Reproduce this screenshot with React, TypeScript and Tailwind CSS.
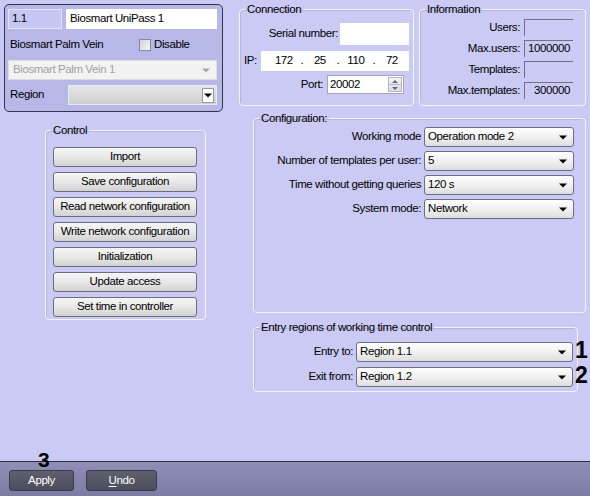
import React from "react";

const font = "font-['Liberation_Sans',Arial,sans-serif]";

function Arrow({ gray = false }: { gray?: boolean }) {
  return (
    <svg width="8" height="5" viewBox="0 0 8 5" className="shrink-0">
      <path d="M0 0.5h8L4 4.5z" fill={gray ? "#a8a8a8" : "#000"} />
    </svg>
  );
}

function Combo({ value, className }: { value: string; className: string }) {
  return (
    <div
      className={`flex h-[20px] items-center rounded-[3px] border border-[#6e6e7e] bg-linear-to-b from-white via-[#f1f1f1] to-[#dedede] pl-[3px] pr-[6px] ${className}`}
    >
      <span className="flex-1 truncate">{value}</span>
      <Arrow />
    </div>
  );
}

function Group({
  title,
  className,
  children,
}: {
  title: string;
  className: string;
  children: React.ReactNode;
}) {
  return (
    <fieldset className={`rounded-[4px] border border-[#f4f4ff] shadow-[inset_1px_1px_0_#b4b4dc] ${className}`}>
      <legend className="ml-[5px] px-[2px] leading-[14px]">{title}</legend>
      {children}
    </fieldset>
  );
}

function InfoRow({ label, value }: { label: string; value: string }) {
  return (
    <div className="flex h-[17px] items-center justify-end">
      <span>{label}</span>
      <div className="ml-[4px] flex h-[17px] w-[49px] items-center justify-end border-t border-l border-[#6f6f86] border-r-white border-b-white pr-[3px] leading-none">
        {value}
      </div>
    </div>
  );
}

function ConfigRow({ label, value }: { label: string; value: string }) {
  return (
    <div className="flex items-center justify-end">
      <span>{label}</span>
      <Combo value={value} className="ml-[3px] w-[150px]" />
    </div>
  );
}

const buttons = [
  "Import",
  "Save configuration",
  "Read network configuration",
  "Write network configuration",
  "Initialization",
  "Update access",
  "Set time in controller",
];

export default function App() {
  return (
    <div className={`flex h-[496px] w-[590px] flex-col overflow-hidden bg-[#cacaf4] text-[11.5px] tracking-[-0.4px] text-black ${font}`}>
      <div className="relative flex flex-1">
        {/* left column */}
        <div className="flex w-[239px] flex-col pl-[4px] pt-[4px]">
          <div className="h-[108px] w-[219px] rounded-[5px] border border-[#34344e] bg-[#b7b7e8] pl-[3px] pr-[5px] pt-[4px]">
            <div className="flex h-[20px] gap-[4px]">
              <div className="flex w-[54px] items-center border border-[#e2e2ff] bg-[#c6c6f3] pl-[3px]">1.1</div>
              <div className="flex flex-1 items-center bg-white pl-[4px]">Biosmart UniPass 1</div>
            </div>
            <div className="flex h-[31px] items-center pl-[2px]">
              <span className="w-[129px]">Biosmart Palm Vein</span>
              <span className="h-[12px] w-[12px] border border-[#8a8a9c] bg-linear-to-br from-[#d4d4d8] to-[#f6f6f8]" />
              <span className="ml-[3px]">Disable</span>
            </div>
            <div className="flex h-[20px] items-center border border-[#dcdcdc] bg-[#f2f2f2] pl-[4px] pr-[6px] text-[#a2a2a2]">
              <span className="flex-1">Biosmart Palm Vein 1</span>
              <Arrow gray />
            </div>
            <div className="mt-[5px] flex h-[20px] items-center">
              <span className="w-[60px] pl-[2px]">Region</span>
              <div className="flex h-[20px] flex-1 items-center justify-end border border-[#e8e8f0] bg-linear-to-b from-[#e6e6e6] to-[#cfcfcf] pr-[2px]">
                <div className="flex h-[15px] w-[12px] items-center justify-center border border-[#9a9a9a] bg-white">
                  <Arrow />
                </div>
              </div>
            </div>
          </div>

          <Group title="Control" className="ml-[41px] mt-[11px] h-[197px] w-[161px]">
            <div className="flex flex-col gap-[5px] pl-[7px] pt-[10px]">
              {buttons.map((b) => (
                <div
                  key={b}
                  className="flex h-[20px] w-[144px] items-center justify-center rounded-[3px] border border-[#6c6c7c] bg-linear-to-b from-[#f6f6f6] via-[#e8e8e8] to-[#d2d2d2]"
                >
                  {b}
                </div>
              ))}
            </div>
          </Group>
        </div>

        {/* right column */}
        <div className="flex flex-col pt-[2px]">
          <div className="flex gap-[5px]">
            <Group title="Connection" className="h-[104px] w-[175px]">
              <div className="flex flex-col pt-[7px]">
                <div className="flex items-center justify-end pr-[4px]">
                  <span>Serial number:</span>
                  <div className="ml-[2px] h-[22px] w-[69px] bg-white" />
                </div>
                <div className="mt-[6px] flex items-center pl-[4px] pr-[4px]">
                  <span>IP:</span>
                  <div className="ml-[4px] flex h-[20px] flex-1 items-center bg-white pl-[12px]">
                    <span className="w-[22px] text-center">172</span>
                    <span className="w-[14px] text-center">.</span>
                    <span className="w-[22px] text-center">25</span>
                    <span className="w-[14px] text-center">.</span>
                    <span className="w-[22px] text-center">110</span>
                    <span className="w-[14px] text-center">.</span>
                    <span className="w-[22px] text-center">72</span>
                  </div>
                </div>
                <div className="mt-[4px] flex items-center justify-end pr-[9px]">
                  <span>Port:</span>
                  <div className="ml-[4px] flex h-[19px] w-[77px] items-center border border-[#a4a4b4] bg-white pl-[2px] pr-[1px]">
                    <span className="flex-1">20002</span>
                    <div className="flex h-[15px] w-[14px] flex-col border border-[#b4b4c4] bg-linear-to-b from-[#f4f4f8] to-[#dcdce4]">
                      <div className="flex flex-1 items-center justify-center border-b border-[#b4b4c4]">
                        <svg width="6" height="3" viewBox="0 0 6 3"><path d="M0 3h6L3 0z" fill="#5c6a80" /></svg>
                      </div>
                      <div className="flex flex-1 items-center justify-center">
                        <svg width="6" height="3" viewBox="0 0 6 3"><path d="M0 0h6L3 3z" fill="#5c6a80" /></svg>
                      </div>
                    </div>
                  </div>
                </div>
              </div>
            </Group>
            <Group title="Information" className="h-[104px] w-[167px]">
              <div className="flex flex-col gap-[4px] pr-[12px] pt-[3px]">
                <InfoRow label="Users:" value="" />
                <InfoRow label="Max.users:" value="1000000" />
                <InfoRow label="Templates:" value="" />
                <InfoRow label="Max.templates:" value="300000" />
              </div>
            </Group>
          </div>

          <Group title="Configuration:" className="ml-[14px] mt-[5px] h-[202px] w-[333px]">
            <div className="flex flex-col gap-[4px] pr-[11px] pt-[2px]">
              <ConfigRow label="Working mode" value="Operation mode 2" />
              <ConfigRow label="Number of templates per user:" value="5" />
              <ConfigRow label="Time without getting queries" value="120 s" />
              <ConfigRow label="System mode:" value="Network" />
            </div>
          </Group>

          <Group title="Entry regions of working time control" className="ml-[14px] mt-[7px] h-[72px] w-[325px]">
            <div className="flex flex-col gap-[5px] pr-[4px] pt-[8px]">
              <div className="flex items-center justify-end">
                <span>Entry to:</span>
                <Combo value="Region 1.1" className="ml-[3px] w-[217px]" />
              </div>
              <div className="flex items-center justify-end">
                <span>Exit from:</span>
                <Combo value="Region 1.2" className="ml-[3px] w-[217px]" />
              </div>
            </div>
          </Group>
        </div>

        {/* callout numbers */}
        <span className="absolute left-[575px] top-[337px] text-[23px] font-bold leading-[26px] tracking-normal">1</span>
        <span className="absolute left-[575px] top-[362px] text-[23px] font-bold leading-[26px] tracking-normal">2</span>
        <span className="absolute left-[38px] top-[448px] text-[21px] font-bold leading-[24px] tracking-normal">3</span>
      </div>

      <div className="flex h-[35px] shrink-0 gap-[12px] border-t border-[#2c2c40] bg-linear-to-b from-[#8e8eb6] to-[#7c7ca4] pl-[9px] pt-[8px]">
        <div className="flex h-[21px] w-[65px] items-center justify-center rounded-[3px] border border-[#3a3a4e] bg-linear-to-b from-[#60606f] to-[#4c4c5c] text-white">
          Apply
        </div>
        <div className="flex h-[21px] w-[71px] items-center justify-center rounded-[3px] border border-[#3a3a4e] bg-linear-to-b from-[#60606f] to-[#4c4c5c] text-white">
          <span className="underline underline-offset-2">U</span>ndo
        </div>
      </div>
    </div>
  );
}
